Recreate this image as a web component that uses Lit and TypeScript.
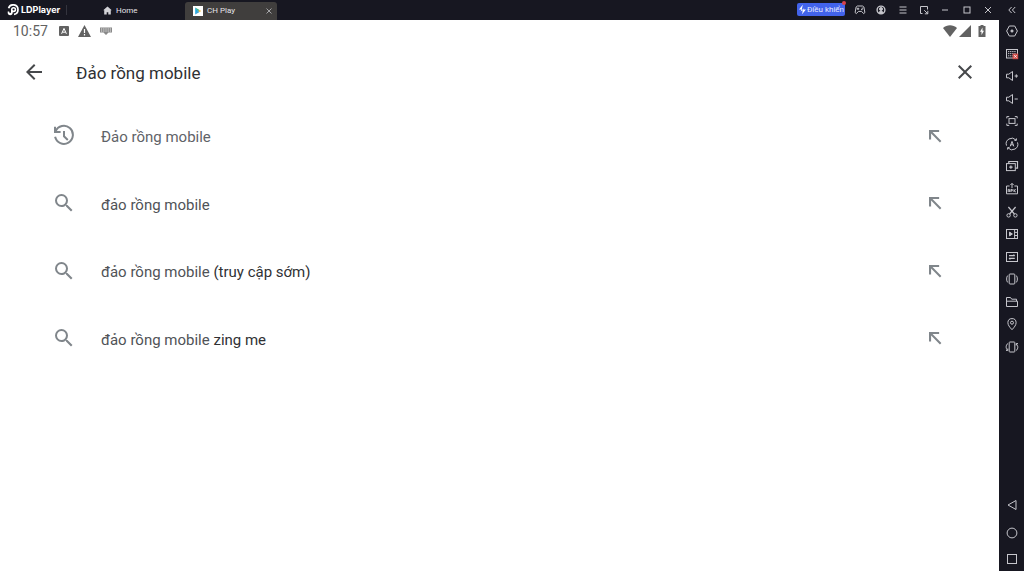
import { LitElement, html, css, svg, nothing, TemplateResult } from "lit";
import { customElement, property } from "lit/decorators.js";

type Glyph = TemplateResult<2>;

/* Line glyphs of the emulator chrome, drawn on a 14 x 14 grid. */
const chrome: Record<string, Glyph> = {
  pad: svg`<path d="M4.400 3h5.200l1.300 1 1 5.600-1.300 1-2-2.200H5.400l-2 2.200-1.300-1 1-5.600zM3.700 5.800h2.600M5 4.600v2.400M8.600 5.200h1.600M8 6.600h1.600"/>`,
  account: svg`<circle cx="7" cy="7" r="3.900" stroke-width="1.400"/><circle cx="7" cy="6" r="1.500" fill="currentColor"/><path d="M4.600 9.400c.8-1.200 4-1.200 4.800 0L7 10.600z" fill="currentColor"/>`,
  menu: svg`<path d="M3.500 4h7M3.500 7h7M3.500 10h7"/>`,
  pin: svg`<path d="M5.500 10.500H3.500v-7h7v3M7.200 7.200l3.600 3.600M10.800 7.800v3h-3"/>`,
  minimize: svg`<path d="M4 7h6"/>`,
  maximize: svg`<rect x="4" y="4" width="6" height="6"/>`,
  close: svg`<path d="M4 4l6 6M10 4l-6 6"/>`,
  collapse: svg`<path d="M6.600 4L3.800 7l2.800 3M10.200 4L7.400 7l2.800 3"/>`,
  settings: svg`<path d="M4.300 2h5.400l2.700 5-2.700 5H4.300L1.600 7z"/><circle cx="7" cy="7" r="1.100" fill="currentColor"/>`,
  keyboard: svg`<rect x="1.500" y="2.500" width="11" height="8.500"/><path d="M3 4.600h8M3 6.600h8M3 8.800h5" stroke-dasharray="1.300 .8"/><rect x="7.600" y="6.600" width="5.600" height="5.600" fill="#d2504c" stroke="none"/><path d="M9.100 8.100l2.600 2.600M11.700 8.100l-2.600 2.600" stroke="#fff" stroke-width=".8"/>`,
  volumeUp: svg`<path d="M1.500 5.200h2.300L7.500 2.500v9L3.800 8.800H1.500zM9.600 7h3.400M11.300 5.300v3.400"/>`,
  volumeDown: svg`<path d="M1.500 5.200h2.300L7.500 2.500v9L3.800 8.800H1.500zM9.600 7h3.200"/>`,
  fullscreen: svg`<rect x="4" y="4.600" width="6" height="4.800"/><path d="M1.800 4.400V2.600h2.400M9.800 2.600h2.400v1.800M12.200 9.600v1.800H9.800M4.200 11.400H1.800V9.600"/>`,
  auto: svg`<path d="M1.500 8.600A5.600 5.600 0 0 1 11 3.100M12.500 5.400A5.600 5.600 0 0 1 3 10.900M11.400 1.400v2h-2M2.600 12.600v-2h2M5.200 9.400L7 4.400l1.800 5M5.800 7.800h2.400"/>`,
  multi: svg`<rect x="1.500" y="4.600" width="8.800" height="7"/><path d="M3.800 4.400V2.500h8.700v6.600h-2M5.900 6.400v3.400M4.200 8.100h3.400" stroke-width="1.200"/>`,
  apk: svg`<path d="M4.600 4H1.500v7.800h11V4H9.400M7 6V1.500M5.400 3L7 1.400 8.600 3M3.200 10V7.400h1.200V10M5.900 10V7.400h1.400v1.400H6M9 7.200V10M10.800 7.400L9.200 8.800l1.600 1.200"/>`,
  scissors: svg`<circle cx="3.600" cy="10.400" r="1.700"/><circle cx="10.400" cy="10.400" r="1.700"/><path d="M4.600 9L10.600 2M9.400 9L3.400 2" stroke-width="1.200"/>`,
  record: svg`<rect x="1.500" y="2.500" width="11" height="9"/><path d="M9.600 2.500v9M9.600 5.400h2.900M9.600 8.500h2.900"/><path d="M4.500 5.100v3.800L7.400 7z" fill="currentColor"/>`,
  script: svg`<rect x="1.500" y="2.500" width="11" height="9"/><path d="M4 5.700h5.800M4 8.300h5.800M8.400 4.600l1.400 1.100M5.400 9.400L4 8.300" stroke-width="1.200"/>`,
  shake: svg`<rect x="4.200" y="2" width="5.600" height="10" rx=".8"/><path d="M2.600 3.600c-1.300 1.600-1.300 5.200 0 6.800M11.400 3.600c1.300 1.600 1.300 5.200 0 6.800"/>`,
  folder: svg`<path d="M1.500 11.500v-9h4l1.200 1.700h4.800v2M1.500 11.500h11V6.200h-11"/>`,
  place: svg`<path d="M7 12.700C4.500 10 2.900 8 2.900 5.700a4.100 4.100 0 0 1 8.200 0C11.100 8 9.500 10 7 12.700z"/><circle cx="7" cy="5.700" r="1.500"/>`,
  rotate: svg`<rect x="4.200" y="2" width="5.600" height="10" rx=".6"/><path d="M3 3.400C.6 5 .6 8.600 2.600 10.200M2.800 8.500v1.900H1M11 3.800C13.400 5.400 13.400 9 11 10.600M11.200 5.500V3.600H13"/>`,
  back: svg`<path d="M11 2.500v9L3 7z"/>`,
  home: svg`<circle cx="7" cy="7" r="4.900"/>`,
  recent: svg`<rect x="2.500" y="2.500" width="9" height="9"/>`,
};

/* Solid glyphs of the store page, drawn on a 24 x 24 grid. */
const page: Record<string, Glyph> = {
  arrowBack: svg`<path d="M20 11H7.830l5.590-5.590L12 4l-8 8 8 8 1.410-1.410L7.830 13H20z"/>`,
  clear: svg`<path d="M19 6.410L17.590 5 12 10.590 6.410 5 5 6.410 10.590 12 5 17.590 6.410 19 12 13.410 17.590 19 19 17.590 13.410 12z"/>`,
  history: svg`<path d="M3.600 7.300A9 9 0 1 1 3.100 12.800M3 2.800V8h5.600M12 7v5.300l3.800 3.600" fill="none" stroke="currentColor" stroke-width="2"/>`,
  search: svg`<path d="M15.500 14h-.79l-.28-.27A6.471 6.471 0 0 0 16 9.500 6.500 6.500 0 1 0 9.500 16c1.610 0 3.090-.59 4.230-1.570l.27.28v.79l5 4.990L20.490 19l-4.990-5zm-6 0C7.010 14 5 11.990 5 9.500S7.010 5 9.500 5 14 7.010 14 9.500 11.990 14 9.500 14z"/>`,
  insert: svg`<path d="M4 16.500h2.800V8.700L18.600 20.500l1.900-1.900L8.700 6.800h8.800V4H4z"/>`,
};

@customElement("chrome-button")
class ChromeButton extends LitElement {
  @property() name = "";
  @property() label = "";

  static styles = css`
    :host {
      display: grid;
    }
    button {
      display: grid;
      place-items: center;
      padding: 0;
      border: 0;
      background: none;
      color: #c6c6cc;
    }
    svg {
      display: block;
      width: 14px;
      height: 14px;
      fill: none;
      stroke: currentColor;
    }
  `;

  render() {
    return html`<button aria-label=${this.label}>
      <svg viewBox="0 0 14 14" aria-hidden="true">${chrome[this.name]}</svg>
    </button>`;
  }
}

@customElement("title-bar")
class TitleBar extends LitElement {
  static styles = css`
    :host {
      display: flex;
      height: 20px;
      background: #171721;
      color: #e4e4e8;
      font: 8px/16px Roboto, sans-serif;
    }
    svg {
      display: block;
      flex: none;
    }
    .brand {
      display: flex;
      align-items: center;
      gap: 2px;
      box-sizing: border-box;
      width: 67px;
      height: 19px;
      padding-left: 7px;
      font: 700 9px/18px Inter, sans-serif;
      color: #fff;
    }
    .brand::after {
      content: "";
      width: 1px;
      height: 10px;
      margin-left: auto;
      background: #34343e;
    }
    .tabs {
      display: flex;
      flex: 1;
    }
    .tab {
      display: flex;
      align-items: center;
      gap: 4px;
      box-sizing: border-box;
      height: 20px;
      width: 118px;
      padding: 0 8px 0 36px;
    }
    .tab.active {
      width: 92px;
      height: 18px;
      margin-top: 2px;
      padding: 0 4px 0 8px;
      border-radius: 3px 3px 0 0;
      background: #403e3d;
    }
    .tab button,
    .control {
      border: 0;
      padding: 0;
      font: inherit;
      color: inherit;
      background: none;
    }
    .tab .title {
      padding-top: 1px;
    }
    .tab.active .title {
      padding-top: 0;
    }
    .tab .shut {
      margin-left: auto;
      color: #a5a5a8;
    }
    .control {
      position: relative;
      display: flex;
      align-items: center;
      align-self: flex-start;
      height: 13px;
      margin: 3px 4px 0 0;
      padding: 0 1px;
      border-radius: 2px;
      background: #4263eb;
      color: #e6eaff;
    }
    .control::after {
      content: "";
      position: absolute;
      top: -2px;
      right: -1px;
      width: 4px;
      height: 4px;
      border-radius: 2px;
      background: #d8424c;
    }
    .window {
      display: grid;
      grid-template-columns: repeat(7, 1fr);
      width: 150px;
      height: 19px;
    }
    .collapse {
      width: 25px;
      height: 19px;
    }
  `;

  render() {
    const actions = [
      ["pad", "Gamepad"],
      ["account", "Account"],
      ["menu", "Menu"],
      ["pin", "Mini window"],
      ["minimize", "Minimize"],
      ["maximize", "Maximize"],
      ["close", "Close"],
    ];
    return html`
      <div class="brand">
        <svg width="12" height="12" viewBox="0 0 12 12" aria-hidden="true">
          <path d="M1.600 4.200A4.800 4.800 0 1 1 7 10.400" fill="none" stroke="#fff" stroke-width="1.700" />
          <path d="M6.600 2.900a2.600 2.600 0 1 1 0 5.300H5.800c0 1.900-1 3-2.600 3C1.600 11.200.7 10.200.7 8.800V7.600h1.500c0 1 .3 1.400.9 1.400s.9-.4.9-1.200V5.500a2.600 2.600 0 0 1 2.600-2.600z" fill="#fff" />
          <circle cx="6.600" cy="5.500" r="1.100" fill="#171721" />
        </svg>
        <span>LDPlayer</span>
      </div>
      <nav class="tabs">
        <div class="tab">
          <svg width="9" height="9" viewBox="0 0 9 9" fill="#d2d2d6" aria-hidden="true">
            <path d="M4.500 .5L8.800 4.200H7.800V8.600H5.300V6.200H3.700V8.600H1.200V4.200H.2z" />
          </svg>
          <button class="title">Home</button>
        </div>
        <div class="tab active">
          <svg width="10" height="10" viewBox="0 0 10 10" aria-hidden="true">
            <rect width="10" height="10" fill="#fff" />
            <path d="M2.200 1.500V8.500L5.400 5z" fill="#25a8e0" />
            <path d="M2.200 1.500L6.500 3.900 5.400 5z" fill="#2fae64" />
            <path d="M2.200 8.500L6.500 6.100 5.400 5z" fill="#2b8fc4" />
            <path d="M6.500 3.900L8.300 5 6.500 6.100 5.400 5z" fill="#f3b93a" />
          </svg>
          <button class="title">CH Play</button>
          <button class="shut" aria-label="Close tab">
            <svg width="8" height="8" viewBox="0 0 8 8" stroke="currentColor"><path d="M1.500 1.500l5 5M6.500 1.500l-5 5" /></svg>
          </button>
        </div>
      </nav>
      <button class="control">
        <svg width="9" height="11" viewBox="0 0 9 11" fill="#fff" aria-hidden="true">
          <path d="M4.800.8L1 5.600h2.400l-.8 2.200L5 5.600H3.800zM6.400 3.400L5.600 5.400H8L3.800 10.400l1-3.200H4z" />
        </svg>
        <span>Điều khiển</span>
      </button>
      <div class="window">
        ${actions.map(([n, l]) => html`<chrome-button name=${n} label=${l}></chrome-button>`)}
      </div>
      <chrome-button class="collapse" name="collapse" label="Collapse toolbar"></chrome-button>
    `;
  }
}

@customElement("side-bar")
class SideBar extends LitElement {
  static styles = css`
    :host {
      display: flex;
      flex-direction: column;
      justify-content: space-between;
      width: 25px;
      background: #171721;
    }
    .tools {
      display: grid;
      grid-auto-rows: 1fr;
      height: 338px;
    }
    .keys {
      display: grid;
      grid-template-rows: 28px 28px 24px;
    }
  `;

  render() {
    const tools = [
      ["settings", "Settings"],
      ["keyboard", "Keyboard mapping"],
      ["volumeUp", "Volume up"],
      ["volumeDown", "Volume down"],
      ["fullscreen", "Full screen"],
      ["auto", "Auto"],
      ["multi", "Multi-instance"],
      ["apk", "Install APK"],
      ["scissors", "Screenshot"],
      ["record", "Record"],
      ["script", "Script"],
      ["shake", "Shake"],
      ["folder", "Shared folder"],
      ["place", "Location"],
      ["rotate", "Rotate"],
    ];
    const keys = [
      ["back", "Back"],
      ["home", "Home"],
      ["recent", "Recent apps"],
    ];
    return html`
      <div class="tools">${tools.map(([n, l]) => html`<chrome-button name=${n} label=${l}></chrome-button>`)}</div>
      <div class="keys">${keys.map(([n, l]) => html`<chrome-button name=${n} label=${l}></chrome-button>`)}</div>
    `;
  }
}

interface Suggestion {
  icon: "history" | "search";
  typed: string;
  rest?: string;
}

@customElement("store-search")
class StoreSearch extends LitElement {
  static styles = css`
    :host {
      display: block;
      background: #fff;
      font-family: Roboto, sans-serif;
      color: #3c4043;
    }
    button {
      display: flex;
      align-items: center;
      padding: 0;
      border: 0;
      background: none;
      font: inherit;
      color: inherit;
      text-align: left;
    }
    svg {
      display: block;
      flex: none;
      fill: currentColor;
    }
    .status {
      display: flex;
      align-items: center;
      height: 22px;
      padding: 0 12px 0 13px;
      color: #626262;
      font-size: 14px;
    }
    .notices,
    .signals {
      display: flex;
      align-items: center;
      gap: 9px;
      margin-left: 11px;
    }
    .signals {
      gap: 2px;
      margin-left: auto;
    }
    .search {
      display: flex;
      align-items: center;
      height: 60px;
      padding: 0 22px;
    }
    .search button {
      color: #46484b;
    }
    .search input {
      flex: 1;
      min-width: 0;
      margin: 0 30px;
      padding: 1px 0 0;
      border: 0;
      outline: 0;
      background: none;
      color: #303134;
      font: 17px/24px Roboto, sans-serif;
    }
    .list {
      display: grid;
      grid-auto-rows: 1fr;
      height: 270px;
      margin: 0;
      padding: 0 55px 0 52px;
      list-style: none;
    }
    .row {
      display: flex;
      color: #80868b;
    }
    .pick {
      flex: 1;
      gap: 25px;
      font-size: 15px;
    }
    .text {
      padding-top: 3px;
      color: #505357;
    }
    .past .text {
      color: #5f6368;
    }
    .rest {
      color: #303134;
    }
  `;

  private suggestions: Suggestion[] = [
    { icon: "history", typed: "Đảo rồng mobile" },
    { icon: "search", typed: "đảo rồng mobile" },
    { icon: "search", typed: "đảo rồng mobile", rest: "(truy cập sớm)" },
    { icon: "search", typed: "đảo rồng mobile", rest: "zing me" },
  ];

  private glyph(name: string, size: number) {
    return html`<svg width=${size} height=${size} viewBox="0 0 24 24" aria-hidden="true">${page[name]}</svg>`;
  }

  render() {
    return html`
      <div class="status">
        <time>10:57</time>
        <div class="notices">
          <svg width="10" height="10" viewBox="0 0 10 10" aria-hidden="true">
            <rect width="10" height="10" rx="1" />
            <path d="M2.600 7.800L5 2.400l2.400 5.400M3.500 6.200h3" fill="none" stroke="#fff" />
          </svg>
          <svg width="13" height="12" viewBox="0 0 13 12" aria-hidden="true">
            <path d="M6.500 0L13 12H0z" />
            <path d="M6.500 4v4M6.500 9v1.400" stroke="#fff" stroke-width="1.200" />
          </svg>
          <svg width="12" height="8" viewBox="0 0 12 8" aria-hidden="true">
            <path d="M0 .5h12v5H8.500L6 8 3.500 5.500H0z" opacity=".75" />
            <path d="M1 2h10M1 4h10" stroke="#fff" stroke-width=".8" stroke-dasharray="1 .8" />
          </svg>
        </div>
        <div class="signals">
          <svg width="14" height="12" viewBox="0 0 14 12" aria-hidden="true"><path d="M0 3C4-.8 10-.8 14 3L7 12z" /></svg>
          <svg width="12" height="12" viewBox="0 0 12 12" aria-hidden="true"><path d="M12 0v12H0z" /></svg>
          <svg width="14" height="12" viewBox="0 0 14 12" aria-hidden="true">
            <path d="M5.500 1h2V0h3v1h2v11h-7z" />
            <path d="M9.500 2.500L7 6.800h1.500v3.200L11 5.800H9.500z" fill="#fff" />
          </svg>
        </div>
      </div>
      <form class="search" @submit=${(e: Event) => e.preventDefault()}>
        <button type="button" aria-label="Back">${this.glyph("arrowBack", 24)}</button>
        <input type="text" aria-label="Search" .value=${"Đảo rồng mobile"} spellcheck="false" />
        <button type="button" aria-label="Clear">${this.glyph("clear", 24)}</button>
      </form>
      <ul class="list">
        ${this.suggestions.map(
          (s) => html`<li class="row ${s.icon === "history" ? "past" : ""}">
            <button class="pick">
              ${this.glyph(s.icon, 24)}
              <span class="text">${s.typed}${s.rest ? html` <span class="rest">${s.rest}</span>` : nothing}</span>
            </button>
            <button aria-label="Use this suggestion">${this.glyph("insert", 18)}</button>
          </li>`
        )}
      </ul>
    `;
  }
}

@customElement("app-root")
class AppRoot extends LitElement {
  static styles = css`
    :host {
      display: flex;
      flex-direction: column;
      box-sizing: border-box;
      height: 100vh;
      padding-bottom: 5px;
      background: #fff;
    }
    .body {
      display: flex;
      flex: 1;
      min-height: 0;
    }
    store-search {
      flex: 1;
      min-width: 0;
    }
  `;

  render() {
    return html`
      <title-bar></title-bar>
      <div class="body">
        <store-search></store-search>
        <side-bar></side-bar>
      </div>
    `;
  }
}
